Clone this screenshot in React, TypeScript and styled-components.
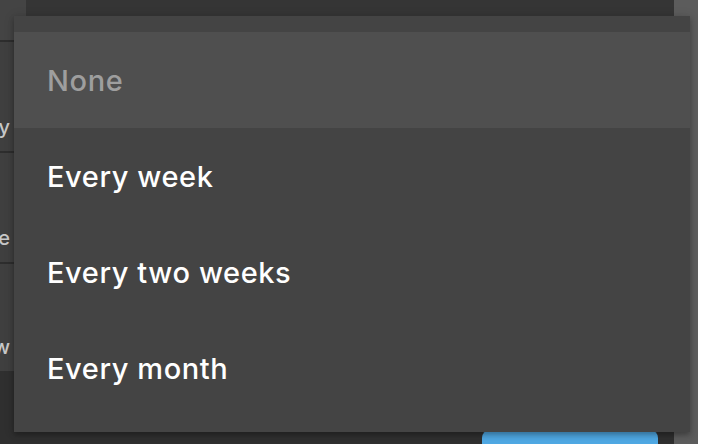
import React, { useState } from 'react';
import styled, { createGlobalStyle } from 'styled-components';

const GlobalStyle = createGlobalStyle`
  html, body {
    margin: 0;
    padding: 0;
    background: #ffffff;
    font-family: Inter, 'Noto Sans', sans-serif;
  }
`;

const OPTIONS = ['None', 'Every week', 'Every two weeks', 'Every month'];
const SIDE_LABELS = ['Frequency', 'Schedule', 'Overview'];

const Page = styled.div`
  position: relative;
  width: 712px;
  height: 444px;
  overflow: hidden;
  display: flex;
  background: #ffffff;
`;

// grey scrim behind the dialog
const Scrim = styled.div`
  width: 698px;
  height: 100%;
  background: #5c5c5c;
  display: flex;
`;

const Dialog = styled.div`
  width: 674px;
  height: 100%;
  display: flex;
  flex-direction: column;
  background: #2f2f2f;
`;

const TopBar = styled.div`
  height: 16px;
  flex-shrink: 0;
  display: flex;
  background: #353535;
`;

const TopBarCorner = styled.div`
  width: 26px;
  background: #444444;
`;

const Body = styled.div`
  flex: 1;
  display: flex;
`;

const SidePanel = styled.div`
  width: 14px;
  display: flex;
  flex-direction: column;
`;

const SideHead = styled.div`
  height: 24px;
  background: #444444;
  border-bottom: 2px solid #2d2d2d;
`;

const SideRow = styled.div<{ $last?: boolean }>`
  box-sizing: border-box;
  height: ${(p) => (p.$last ? 107 : 111)}px;
  display: flex;
  align-items: flex-end;
  justify-content: flex-end;
  overflow: hidden;
  background: #3f3f3f;
  border-bottom: ${(p) => (p.$last ? 'none' : '2px solid #2d2d2d')};
  padding: 0 4px 12px 0;
`;

const SideText = styled.span`
  font-size: 20px;
  font-weight: 500;
  line-height: 24px;
  color: #c8c8c8;
  white-space: nowrap;
`;

const Footer = styled.div`
  position: absolute;
  left: 482px;
  top: 430px;
  width: 176px;
  height: 40px;
  border-radius: 8px;
  background: #4fa8e3;
`;

const Menu = styled.ul`
  position: absolute;
  left: 14px;
  top: 16px;
  width: 676px;
  margin: 0;
  padding: 16px 0;
  list-style: none;
  background: #444444;
  box-shadow: 0 3px 5px rgba(0, 0, 0, 0.25), 0 1px 10px rgba(0, 0, 0, 0.15);
`;

const MenuItem = styled.li<{ $selected: boolean }>`
  height: 96px;
  display: flex;
  align-items: center;
  padding-left: 33px;
  font-size: 29px;
  font-weight: 500;
  letter-spacing: 0.6px;
  color: ${(p) => (p.$selected ? '#9e9e9e' : '#ffffff')};
  background: ${(p) => (p.$selected ? '#4f4f4f' : 'transparent')};
  cursor: pointer;
`;

export default function App() {
  const [selected, setSelected] = useState(0);

  return (
    <Page>
      <GlobalStyle />
      <Scrim>
        <Dialog>
          <TopBar>
            <TopBarCorner />
          </TopBar>
          <Body>
            <SidePanel>
              <SideHead />
              {SIDE_LABELS.map((label, i) => (
                <SideRow key={label} $last={i === SIDE_LABELS.length - 1}>
                  <SideText>{label}</SideText>
                </SideRow>
              ))}
            </SidePanel>
          </Body>
        </Dialog>
      </Scrim>
      <Footer />
      <Menu role="listbox">
        {OPTIONS.map((opt, i) => (
          <MenuItem key={opt} $selected={i === selected} onClick={() => setSelected(i)}>
            {opt}
          </MenuItem>
        ))}
      </Menu>
    </Page>
  );
}
